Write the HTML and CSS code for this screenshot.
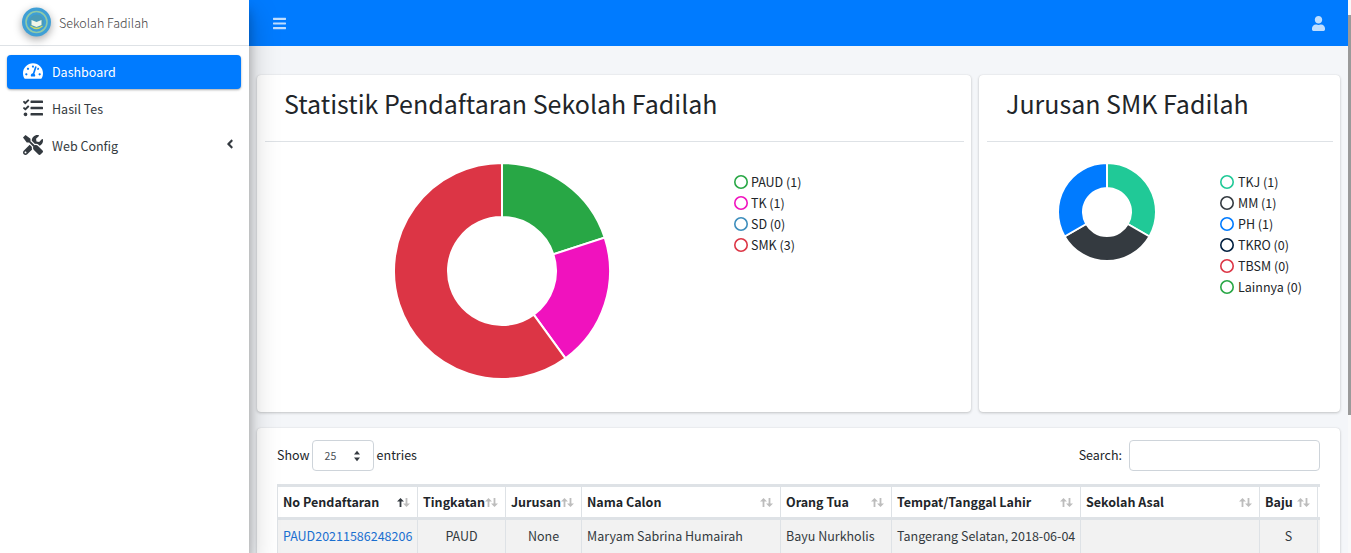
FILE: index.html
```html
<!DOCTYPE html>
<html lang="id">
<head>
<meta charset="utf-8">
<title>Sekolah Fadilah</title>
<link rel="stylesheet" href="styles.css">
</head>
<body>
<svg class="defs" width="0" height="0">
  <symbol id="sort-up" viewBox="0 0 7 9"><path d="M3.5 0L7 3.5H4.4V9H2.6V3.5H0z"/></symbol>
  <symbol id="sort-down" viewBox="0 0 7 9"><path d="M3.5 9L0 5.5h2.6V0h1.8v5.5H7z"/></symbol>
</svg>
<aside class="sidebar">
  <div class="brand">
    <svg class="logo" viewBox="0 0 40 40">
      <circle cx="19.5" cy="19" r="14.5" fill="#3f9fd6"/>
      <circle cx="19.5" cy="19" r="10.5" fill="none" stroke="#8fc9a8" stroke-width="1.6"/>
      <circle cx="19.5" cy="19" r="7.5" fill="#4a9bb8"/>
      <path d="M14.5 17l5 2 5-2v5l-5 2-5-2z" fill="#f2f6e8"/>
      <path d="M13.5 23q6 5 12 0" fill="none" stroke="#c9d96a" stroke-width="1.3"/>
    </svg>
    <span class="brand-text">Sekolah Fadilah</span>
  </div>
  <nav class="nav">
    <a class="nav-item active">
      <svg class="nav-icon" viewBox="0 0 576 512"><path d="M288 32C128.94 32 0 160.94 0 320c0 52.8 14.25 102.26 39.06 144.8 5.61 9.62 16.3 15.2 27.44 15.2h443c11.14 0 21.83-5.58 27.44-15.2C561.75 422.26 576 372.8 576 320c0-159.06-128.94-288-288-288zm0 64c14.71 0 26.58 10.13 30.32 23.65-1.11 2.26-2.64 4.23-3.45 6.67l-9.22 27.67c-5.13 3.49-10.97 6.01-17.64 6.01-17.67 0-32-14.33-32-32S270.33 96 288 96zM96 384c-17.67 0-32-14.33-32-32s14.33-32 32-32 32 14.33 32 32-14.33 32-32 32zm48-160c-17.67 0-32-14.33-32-32s14.33-32 32-32 32 14.33 32 32-14.33 32-32 32zm246.77-72.41l-61.33 184C343.13 347.33 352 364.54 352 384c0 11.72-3.38 22.55-8.88 32H232.88c-5.5-9.45-8.88-20.28-8.88-32 0-33.94 26.5-61.43 59.9-63.59l61.34-184.01c4.17-12.56 17.73-19.45 30.36-15.17 12.57 4.19 19.35 17.79 15.17 30.36zm14.66 57.2l15.52-46.55c3.47-1.29 7.13-2.23 11.05-2.23 17.67 0 32 14.33 32 32s-14.33 32-32 32c-11.38-.01-20.89-6.28-26.57-15.22zM480 384c-17.67 0-32-14.33-32-32s14.33-32 32-32 32 14.33 32 32-14.33 32-32 32z"/></svg>
      <span>Dashboard</span>
    </a>
    <a class="nav-item">
      <svg class="nav-icon" viewBox="0 0 512 512"><path d="M139.61 35.5a12 12 0 0 0-17 0L58.93 98.81l-22.7-22.12a12 12 0 0 0-17 0L3.53 92.41a12 12 0 0 0 0 17l47.59 47.4a12.78 12.78 0 0 0 17.61 0l15.59-15.62L156.52 69a12.09 12.09 0 0 0 .09-17zm0 159.19a12 12 0 0 0-17 0l-63.68 63.72-22.7-22.1a12 12 0 0 0-17 0L3.53 252a12 12 0 0 0 0 17L51 316.5a12.77 12.77 0 0 0 17.6 0l15.7-15.69 72.2-72.22a12 12 0 0 0 .09-16.9zM64 368c-26.49 0-48.59 21.5-48.59 48S37.53 464 64 464a48 48 0 0 0 0-96zm432 16H208a16 16 0 0 0-16 16v32a16 16 0 0 0 16 16h288a16 16 0 0 0 16-16v-32a16 16 0 0 0-16-16zm0-320H208a16 16 0 0 0-16 16v32a16 16 0 0 0 16 16h288a16 16 0 0 0 16-16V80a16 16 0 0 0-16-16zm0 160H208a16 16 0 0 0-16 16v32a16 16 0 0 0 16 16h288a16 16 0 0 0 16-16v-32a16 16 0 0 0-16-16z"/></svg>
      <span>Hasil Tes</span>
    </a>
    <a class="nav-item">
      <svg class="nav-icon" viewBox="0 0 512 512"><path d="M501.1 395.7L384 278.6c-23.1-23.1-57.6-27.6-85.4-13.9L192 158.1V96L64 0 0 64l96 128h62.1l106.6 106.6c-13.6 27.8-9.2 62.3 13.9 85.4l117.1 117.1c14.6 14.6 38.2 14.6 52.7 0l52.7-52.7c14.5-14.6 14.5-38.2 0-52.7zM331.7 225c28.3 0 54.9 11 74.9 31l19.4 19.4c15.8-6.9 30.8-16.5 43.8-29.5 37.1-37.1 49.7-89.3 37.9-136.7-2.2-9-13.5-12.1-20.1-5.5l-74.4 74.4-67.9-11.3L334 98.9l74.4-74.4c6.6-6.6 3.4-17.9-5.7-20.2-47.4-11.7-99.6.9-136.6 37.9-28.5 28.5-41.9 66.1-41.2 103.6l82.1 82.1c8.1-1.9 16.5-2.9 24.7-2.9zm-103.9 82l-56.7-56.7L18.7 402.8c-25 25-25 65.5 0 90.5s65.5 25 90.5 0l123.6-123.6c-7.6-19.9-9.9-41.6-5-62.7zM64 472c-13.2 0-24-10.8-24-24 0-13.3 10.7-24 24-24s24 10.7 24 24c0 13.2-10.7 24-24 24z"/></svg>
      <span class="nav-label">Web Config</span>
      <svg class="nav-caret" viewBox="0 0 256 512"><path d="M31.7 239l136-136c9.4-9.4 24.6-9.4 33.9 0l22.6 22.6c9.4 9.4 9.4 24.6 0 33.9L127.9 256l96.4 96.4c9.4 9.4 9.4 24.6 0 33.9L201.7 413c-9.4 9.4-24.6 9.4-33.9 0l-136-136c-9.5-9.4-9.5-24.6-.1-34z"/></svg>
    </a>
  </nav>
</aside>

<div class="main">
  <header class="topbar">
    <svg class="top-icon" viewBox="0 0 448 512"><path d="M16 132h416c8.837 0 16-7.163 16-16V76c0-8.837-7.163-16-16-16H16C7.163 60 0 67.163 0 76v40c0 8.837 7.163 16 16 16zm0 160h416c8.837 0 16-7.163 16-16v-40c0-8.837-7.163-16-16-16H16c-8.837 0-16 7.163-16 16v40c0 8.837 7.163 16 16 16zm0 160h416c8.837 0 16-7.163 16-16v-40c0-8.837-7.163-16-16-16H16c-8.837 0-16 7.163-16 16v40c0 8.837 7.163 16 16 16z"/></svg>
    <svg class="top-icon" viewBox="0 0 448 512"><path d="M224 256c70.7 0 128-57.3 128-128S294.7 0 224 0 96 57.3 96 128s57.3 128 128 128zm89.6 32h-16.7c-22.2 10.2-46.9 16-72.9 16s-50.6-5.8-72.9-16h-16.7C60.2 288 0 348.2 0 422.4V464c0 26.5 21.5 48 48 48h352c26.5 0 48-21.5 48-48v-41.6c0-74.2-60.2-134.4-134.4-134.4z"/></svg>
  </header>

  <main class="content">
    <div class="charts">
      <section class="card card-wide">
        <h2 class="card-title">Statistik Pendaftaran Sekolah Fadilah</h2>
        <div class="chart-body chart-body-wide">
          <svg class="donut-big" viewBox="-109 -109 218 218">
            <path fill="#28a745" d="M0 -108A108 108 0 0 1 102.71 -33.37L51.36 -16.69A54 54 0 0 0 0 -54Z"/>
            <path fill="#f012be" d="M102.71 -33.37A108 108 0 0 1 63.48 87.37L31.74 43.69A54 54 0 0 0 51.36 -16.69Z"/>
            <path fill="#dc3545" d="M63.48 87.37A108 108 0 1 1 0 -108L0 -54A54 54 0 1 0 31.74 43.69Z"/>
          </svg>
          <ul class="legend">
            <li class="legend-item"><i class="dot c-green"></i>PAUD (1)</li>
            <li class="legend-item"><i class="dot c-pink"></i>TK (1)</li>
            <li class="legend-item"><i class="dot c-sky"></i>SD (0)</li>
            <li class="legend-item"><i class="dot c-red"></i>SMK (3)</li>
          </ul>
        </div>
      </section>
      <section class="card card-narrow">
        <h2 class="card-title">Jurusan SMK Fadilah</h2>
        <div class="chart-body chart-body-narrow">
          <svg class="donut-small" viewBox="-50 -50 100 100">
            <path fill="#20c997" d="M0 -49A49 49 0 0 1 42.44 24.5L20.78 12A24 24 0 0 0 0 -24Z"/>
            <path fill="#343a40" d="M42.44 24.5A49 49 0 0 1 -42.44 24.5L-20.78 12A24 24 0 0 0 20.78 12Z"/>
            <path fill="#007bff" d="M-42.44 24.5A49 49 0 0 1 0 -49L0 -24A24 24 0 0 0 -20.78 12Z"/>
          </svg>
          <ul class="legend">
            <li class="legend-item"><i class="dot c-teal"></i>TKJ (1)</li>
            <li class="legend-item"><i class="dot c-dark"></i>MM (1)</li>
            <li class="legend-item"><i class="dot c-blue"></i>PH (1)</li>
            <li class="legend-item"><i class="dot c-navy"></i>TKRO (0)</li>
            <li class="legend-item"><i class="dot c-red"></i>TBSM (0)</li>
            <li class="legend-item"><i class="dot c-green"></i>Lainnya (0)</li>
          </ul>
        </div>
      </section>
    </div>

    <section class="card card-table">
      <div class="table-tools">
        <label class="tool"><span class="tool-text">Show</span>
          <span class="fake-select"><span>25</span>
            <svg class="select-arrows" viewBox="0 0 10 16"><path d="M5 1l4 5H1zM5 15L1 10h8z"/></svg>
          </span>
          <span class="tool-text">entries</span></label>
        <label class="tool"><span class="tool-text">Search:</span> <input class="search" type="text"></label>
      </div>
      <div class="table-wrap">
        <table class="data">
          <colgroup>
            <col class="w1"><col class="w2"><col class="w3"><col class="w4"><col class="w5"><col class="w6"><col class="w7"><col class="w8"><col class="w9">
          </colgroup>
          <thead>
            <tr>
              <th>No Pendaftaran<span class="sort"><svg class="arrow arrow-on"><use href="#sort-up"/></svg><svg class="arrow"><use href="#sort-down"/></svg></span></th>
              <th>Tingkatan<span class="sort"><svg class="arrow"><use href="#sort-up"/></svg><svg class="arrow"><use href="#sort-down"/></svg></span></th>
              <th>Jurusan<span class="sort"><svg class="arrow"><use href="#sort-up"/></svg><svg class="arrow"><use href="#sort-down"/></svg></span></th>
              <th>Nama Calon<span class="sort"><svg class="arrow"><use href="#sort-up"/></svg><svg class="arrow"><use href="#sort-down"/></svg></span></th>
              <th>Orang Tua<span class="sort"><svg class="arrow"><use href="#sort-up"/></svg><svg class="arrow"><use href="#sort-down"/></svg></span></th>
              <th>Tempat/Tanggal Lahir<span class="sort"><svg class="arrow"><use href="#sort-up"/></svg><svg class="arrow"><use href="#sort-down"/></svg></span></th>
              <th>Sekolah Asal<span class="sort"><svg class="arrow"><use href="#sort-up"/></svg><svg class="arrow"><use href="#sort-down"/></svg></span></th>
              <th>Baju<span class="sort"><svg class="arrow"><use href="#sort-up"/></svg><svg class="arrow"><use href="#sort-down"/></svg></span></th>
              <th></th>
            </tr>
          </thead>
          <tbody>
            <tr>
              <td><a class="link">PAUD20211586248206</a></td>
              <td class="center">PAUD</td>
              <td class="center">None</td>
              <td>Maryam Sabrina Humairah</td>
              <td>Bayu Nurkholis</td>
              <td>Tangerang Selatan, 2018-06-04</td>
              <td></td>
              <td class="center">S</td>
              <td></td>
            </tr>
          </tbody>
        </table>
      </div>
    </section>
  </main>
</div>
<div class="scrollbar"><div class="scrollbar-thumb"></div></div>
</body>
</html>
```
FILE: styles.css
```css
* { box-sizing: border-box; }
html, body { height: 100%; }
body {
  margin: 0;
  display: flex;
  height: 553px;
  overflow: hidden;
  background: #f4f6f9;
  color: #212529;
  font-family: "Noto Sans CJK JP", "Liberation Sans", sans-serif;
  font-size: 12.5px;
  line-height: 21px;
}
.defs { position: absolute; }
.sidebar {
  width: 249px;
  flex: none;
  background: #fff;
  box-shadow: 0 14px 28px rgba(0,0,0,.25), 0 10px 10px rgba(0,0,0,.22);
  position: relative;
  z-index: 2;
}
.brand {
  height: 46px;
  display: flex;
  align-items: center;
  padding-left: 17px;
  border-bottom: 1px solid #dee2e6;
}
.logo { width: 40px; height: 40px; filter: drop-shadow(0 3px 4px rgba(0,0,0,.35)); }
.brand-text { margin-left: 2px; font-weight: 300; color: #444; }
.nav { padding: 9px 8px 0 7px; display: flex; flex-direction: column; gap: 3px; }
.nav-item {
  height: 34px;
  display: flex;
  align-items: center;
  padding: 0 0 2px 16px;
  border-radius: 4px;
  color: #343a40;
}
.nav-item.active {
  background: #007bff;
  color: #fff;
  box-shadow: 0 1px 3px rgba(0,0,0,.12), 0 1px 2px rgba(0,0,0,.24);
}
.nav-icon { width: 20px; height: 20px; fill: currentColor; margin-right: 9px; flex: none; }
.nav-label { flex: 1; }
.nav-caret { width: 8px; height: 14px; fill: #343a40; margin: -2px 7px 0 0; }

.main { flex: 1; min-width: 0; display: flex; flex-direction: column; }
.topbar {
  height: 46px;
  flex: none;
  background: #007bff;
  display: flex;
  justify-content: space-between;
  align-items: center;
  padding: 0 23px 0 24px;
}
.top-icon { width: 13px; height: 15px; fill: rgba(255,255,255,.75); }
.content { padding: 29px 8px 0; flex: 1; min-height: 0; }
.charts { display: flex; gap: 8px; }
.card {
  background: #fff;
  border-radius: 4px;
  box-shadow: 0 0 1px rgba(0,0,0,.125), 0 1px 3px rgba(0,0,0,.2);
}
.card-wide { width: 714px; height: 337px; padding: 0 7px 0 8px; }
.card-narrow { width: 361px; height: 337px; padding: 0 7px 0 8px; }
.card-title {
  margin: 0;
  height: 67px;
  padding: 9px 20px 0 19px;
  font-size: 25px;
  line-height: 38px;
  font-weight: 400;
  border-bottom: 1px solid #dee2e6;
}
.chart-body { display: flex; align-items: flex-start; padding-top: 20px; }
.chart-body-wide { padding-left: 128px; }
.chart-body-narrow { padding-left: 70px; }
.donut-big { width: 218px; height: 218px; flex: none; }
.donut-big path, .donut-small path { stroke: #fff; stroke-width: 2; }
.donut-small { width: 100px; height: 100px; flex: none; }
.chart-body-wide .legend { margin-left: 123px; }
.chart-body-narrow .legend { margin-left: 64px; }
.chart-body-narrow .dot { margin-left: -1px; margin-right: 4px; }
.legend { list-style: none; margin: 9px 0 0; padding: 0; }
.legend-item { display: flex; align-items: center; height: 21px; white-space: nowrap; }
.dot { width: 14px; height: 14px; border-radius: 50%; box-shadow: inset 0 0 0 1.6px currentColor; margin-right: 3px; flex: none; }
.c-green { color: #28a745; }
.c-pink { color: #f012be; }
.c-sky { color: #3c8dbc; }
.c-red { color: #dc3545; }
.c-teal { color: #20c997; }
.c-dark { color: #343a40; }
.c-blue { color: #007bff; }
.c-navy { color: #001f3f; }

.card-table { margin-top: 16px; height: 300px; padding: 12px 20px; }
.table-tools { display: flex; justify-content: space-between; align-items: center; height: 31px; }
.tool { display: flex; align-items: center; gap: 2px; color: #212529; }
.tool-text { margin-top: -2px; }
.fake-select {
  width: 62px;
  height: 31px;
  border: 1px solid #ced4da;
  border-radius: 4px;
  margin-right: 1px;
  display: flex;
  align-items: center;
  justify-content: space-between;
  padding: 0 12px;
  font-size: 10.5px;
  color: #495057;
}
.select-arrows { width: 8px; height: 12px; fill: #343a40; }
.search { width: 191px; height: 31px; margin-left: 5px; border: 1px solid #ced4da; border-radius: 4px; background: #fff; padding: 0 8px; }
.table-wrap { width: 1043px; margin-top: 13px; overflow: hidden; }
.data { table-layout: fixed; width: 1050px; border-collapse: collapse; }
.w1 { width: 140px; } .w2 { width: 88px; } .w3 { width: 76px; } .w4 { width: 199px; }
.w5 { width: 111px; } .w6 { width: 189px; } .w7 { width: 179px; } .w8 { width: 58px; } .w9 { width: 10px; }
.data th, .data td { border: 1px solid #dee2e6; padding: 0 5px 2px; white-space: nowrap; overflow: hidden; }
.data th {
  height: 33px;
  text-align: left;
  font-weight: 700;
  position: relative;
  border-top-width: 3px;
  border-bottom-width: 3px;
  padding-right: 0;
}
.data td { height: 35px; background: #f2f2f2; color: #343a40; }
.center { text-align: center; }
.link { color: #1a6fd0; }
.sort { position: absolute; right: 7px; top: 11px; display: flex; }
.arrow { width: 7px; height: 9px; fill: #bdbdbd; }
.arrow + .arrow { margin-left: -1px; }
.arrow-on { fill: #343a40; }
.scrollbar { width: 3px; flex: none; background: #f8f9fa; padding-top: 15px; height: 553px; }
.scrollbar-thumb { height: 400px; background: #9a9a9a; }
```
